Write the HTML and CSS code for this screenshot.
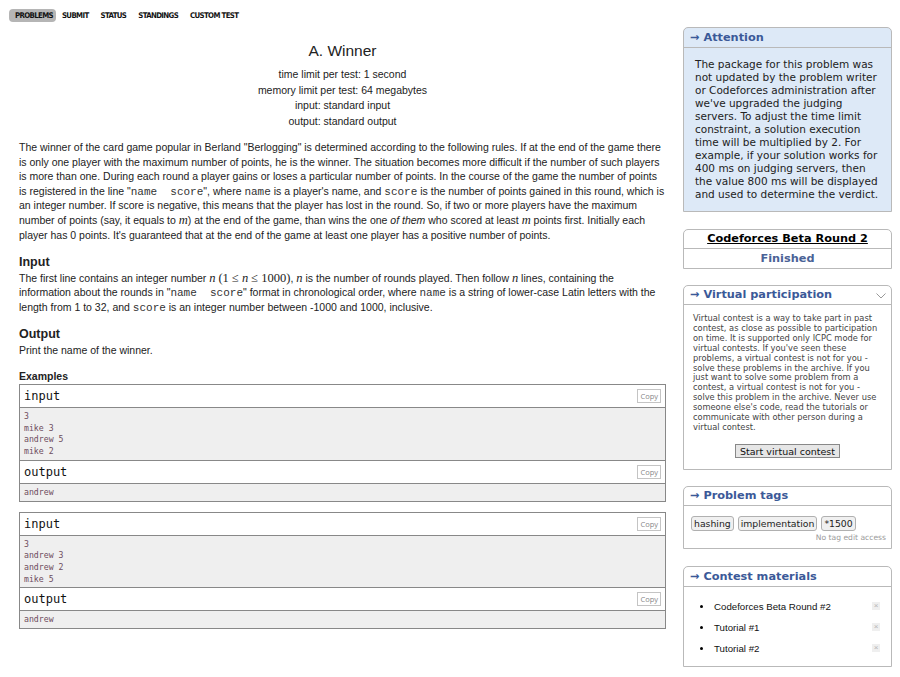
FILE: index.html
```html
<!DOCTYPE html>
<html>
<head>
<meta charset="utf-8">
<link rel="stylesheet" href="styles.css">
</head>
<body>
<nav class="nav">
  <a class="nav-item active">PROBLEMS</a>
  <a class="nav-item">SUBMIT</a>
  <a class="nav-item">STATUS</a>
  <a class="nav-item">STANDINGS</a>
  <a class="nav-item">CUSTOM TEST</a>
</nav>
<div class="layout">
  <main class="problem">
    <div class="title">A. Winner</div>
    <div class="limits">
      <div>time limit per test: 1 second</div>
      <div>memory limit per test: 64 megabytes</div>
      <div>input: standard input</div>
      <div>output: standard output</div>
    </div>
    <p class="para first">The winner of the card game popular in Berland "Berlogging" is determined according to the following rules. If at the end of the game there is only one player with the maximum number of points, he is the winner. The situation becomes more difficult if the number of such players is more than one. During each round a player gains or loses a particular number of points. In the course of the game the number of points is registered in the line "<span class="tt">name&nbsp; score</span>", where <span class="tt">name</span> is a player's name, and <span class="tt">score</span> is the number of points gained in this round, which is an integer number. If score is negative, this means that the player has lost in the round. So, if two or more players have the maximum number of points (say, it equals to <span class="math">m</span>) at the end of the game, than wins the one <i>of them</i> who scored at least <span class="math">m</span> points first. Initially each player has 0 points. It's guaranteed that at the end of the game at least one player has a positive number of points.</p>
    <div class="sec-title">Input</div>
    <p class="para">The first line contains an integer number <span class="math">n</span> <span class="mathr">(1&nbsp;≤&nbsp;<i>n</i>&nbsp;≤&nbsp;1000)</span>, <span class="math">n</span> is the number of rounds played. Then follow <span class="math">n</span> lines, containing the information about the rounds in "<span class="tt">name&nbsp; score</span>" format in chronological order, where <span class="tt">name</span> is a string of lower-case Latin letters with the length from 1 to 32, and <span class="tt">score</span> is an integer number between -1000 and 1000, inclusive.</p>
    <div class="sec-title">Output</div>
    <p class="para">Print the name of the winner.</p>
    <div class="ex-title">Examples</div>
    <div class="sample">
      <div class="s-head">input<span class="copy">Copy</span></div>
      <pre class="s-data">3
mike 3
andrew 5
mike 2</pre>
      <div class="s-head">output<span class="copy">Copy</span></div>
      <pre class="s-data last">andrew</pre>
    </div>
    <div class="sample">
      <div class="s-head">input<span class="copy">Copy</span></div>
      <pre class="s-data">3
andrew 3
andrew 2
mike 5</pre>
      <div class="s-head">output<span class="copy">Copy</span></div>
      <pre class="s-data last">andrew</pre>
    </div>
  </main>
  <aside class="sidebar">
    <section class="box attention">
      <div class="box-head">→ Attention</div>
      <div class="att-body">The package for this problem was not updated by the problem writer or Codeforces administration after we've upgraded the judging servers. To adjust the time limit constraint, a solution execution time will be multiplied by 2. For example, if your solution works for 400 ms on judging servers, then the value 800 ms will be displayed and used to determine the verdict.</div>
    </section>
    <section class="box round">
      <div class="round-name"><a>Codeforces Beta Round 2</a></div>
      <div class="round-state">Finished</div>
    </section>
    <section class="box vp">
      <div class="box-head">→ Virtual participation
        <svg class="chev" width="10" height="6" viewBox="0 0 10 6"><polyline points="0.5,0.5 5,5 9.5,0.5" fill="none" stroke="#999" stroke-width="1"/></svg>
      </div>
      <div class="vp-body">Virtual contest is a way to take part in past contest, as close as possible to participation on time. It is supported only ICPC mode for virtual contests. If you've seen these problems, a virtual contest is not for you - solve these problems in the archive. If you just want to solve some problem from a contest, a virtual contest is not for you - solve this problem in the archive. Never use someone else's code, read the tutorials or communicate with other person during a virtual contest.</div>
      <div class="vp-btn-row"><button class="vp-btn">Start virtual contest</button></div>
    </section>
    <section class="box tagbox">
      <div class="box-head">→ Problem tags</div>
      <div class="tags">
        <span class="tag">hashing</span>
        <span class="tag">implementation</span>
        <span class="tag">*1500</span>
      </div>
      <div class="no-edit">No tag edit access</div>
    </section>
    <section class="box">
      <div class="box-head">→ Contest materials</div>
      <ul class="materials">
        <li><span class="m-name">Codeforces Beta Round #2</span><span class="m-x">×</span></li>
        <li><span class="m-name">Tutorial #1</span><span class="m-x">×</span></li>
        <li><span class="m-name">Tutorial #2</span><span class="m-x">×</span></li>
      </ul>
    </section>
  </aside>
</div>
</body>
</html>
```
FILE: styles.css
```css
body {
  margin: 0;
  font-family: "Liberation Sans", Arial, sans-serif;
  color: #222;
  background: #fff;
}
.nav {
  display: flex;
  padding: 9px 0 0 9px;
}
.nav-item {
  font-family: "DejaVu Sans Condensed", "Liberation Sans", sans-serif;
  font-weight: bold;
  font-size: 7.8px;
  letter-spacing: -0.65px;
  height: 13px;
  line-height: 13px;
  padding: 0 6px;
  color: #111;
  border-radius: 4px;
}
.nav-item.active {
  background: #b5b5b5;
  padding: 0 3px 0 6px;
}
.layout {
  display: flex;
  align-items: flex-start;
  margin-top: 5px;
  padding-left: 19px;
}
.problem {
  width: 647px;
  padding-top: 14px;
}
.title {
  text-align: center;
  font-size: 15.5px;
  line-height: 20px;
}
.limits {
  margin-top: 6px;
  text-align: center;
  font-size: 10.5px;
  line-height: 15.5px;
}
.para {
  margin: 0;
  font-size: 10.5px;
  line-height: 14.6px;
}
.para.first {
  margin-top: 11px;
}
.tt {
  font-family: "Liberation Mono", monospace;
  font-size: 11px;
  line-height: 0;
  color: #333;
}
.math {
  font-family: "Liberation Serif", serif;
  font-style: italic;
  font-size: 12.5px;
  line-height: 0;
}
.mathr {
  font-family: "Liberation Serif", serif;
  font-size: 12.5px;
  line-height: 0;
}
.sec-title {
  font-weight: bold;
  font-size: 12.5px;
  line-height: 16px;
  margin-top: 11.5px;
  margin-bottom: 1px;
}
.ex-title {
  font-weight: bold;
  font-size: 10.5px;
  line-height: 14px;
  margin-top: 11.5px;
  margin-bottom: 1px;
}
.sample {
  border: 1px solid #888;
  margin-bottom: 10px;
}
.s-head {
  height: 22px;
  line-height: 22px;
  font-family: "DejaVu Sans Mono", monospace;
  font-size: 12px;
  padding-left: 4px;
  border-bottom: 1px solid #888;
  position: relative;
  color: #111;
}
.copy {
  position: absolute;
  right: 4px;
  top: 4px;
  height: 12px;
  line-height: 12px;
  padding: 0 2px;
  font-family: "Open Sans", sans-serif;
  font-size: 7.5px;
  color: #888;
  border: 1px solid #c4c4c4;
  background: #fff;
}
.s-data {
  margin: 0;
  background: #efefef;
  padding: 3px 4px 2px;
  font-family: "DejaVu Sans Mono", monospace;
  font-size: 8.2px;
  line-height: 11.7px;
  color: #6e4d5e;
  border-bottom: 1px solid #888;
}
.s-data.last {
  border-bottom: none;
  padding: 3px 4px 2px;
}
.sidebar {
  width: 209px;
  margin-left: 17px;
  font-family: "DejaVu Sans", Verdana, sans-serif;
}
.box {
  border: 1px solid #b9b9b9;
  border-radius: 5px 5px 0 0;
  margin-bottom: 16.5px;
  background: #fff;
}
.box-head {
  height: 19px;
  line-height: 19px;
  font-weight: bold;
  font-size: 11.3px;
  color: #3b5998;
  padding-left: 6px;
  border-bottom: 1px solid #b9b9b9;
  position: relative;
}
.vp .box-head {
  height: 18px;
  line-height: 18px;
}
.chev {
  position: absolute;
  right: 5px;
  top: 7px;
}
.attention {
  background: #dde9f7;
}
.att-body {
  padding: 10px 8px 10px 11px;
  font-size: 10.5px;
  line-height: 13px;
  color: #222;
}
.round {
  text-align: center;
  font-weight: bold;
  font-size: 11.3px;
}
.round-name {
  height: 18px;
  line-height: 18px;
  border-bottom: 1px solid #b9b9b9;
}
.round-name a {
  color: #000;
  text-decoration: underline;
}
.round-state {
  height: 19px;
  line-height: 19px;
  color: #4a6296;
}
.vp-body {
  padding: 9px 8px 0 9px;
  font-size: 8.3px;
  line-height: 9.9px;
  color: #444;
}
.vp-btn-row {
  text-align: center;
  padding: 7px 0 10px;
}
.vp-btn {
  font-family: "DejaVu Sans", Verdana, sans-serif;
  font-size: 9.5px;
  height: 14px;
  line-height: 11px;
  padding: 0 4px;
  background: #e6e6e6;
  border: 1px solid #888;
  border-radius: 0;
  color: #111;
}
.tagbox .box-head {
  height: 18px;
  line-height: 18px;
}
.tags {
  display: flex;
  gap: 4px;
  padding: 10px 0 0 7px;
}
.tag {
  font-size: 9.3px;
  line-height: 13px;
  padding: 0 2px;
  border: 1px solid #b0b0b0;
  border-radius: 3px;
  background: #f0f0f0;
  color: #222;
}
.no-edit {
  text-align: right;
  padding-right: 5px;
  font-size: 7.6px;
  line-height: 10px;
  margin-top: 2px;
  padding-bottom: 5px;
  color: #9a9a9a;
}
.materials {
  list-style: none;
  margin: 0;
  padding: 9px 0 7px 0;
}
.materials li {
  display: flex;
  align-items: center;
  height: 21px;
  padding-left: 30px;
  position: relative;
  font-family: "Liberation Sans", Arial, sans-serif;
  font-size: 9.7px;
  color: #111;
}
.materials li::before {
  content: "";
  position: absolute;
  left: 16px;
  top: 9px;
  width: 3px;
  height: 3px;
  border-radius: 50%;
  background: #000;
}
.m-name {
  flex: 1;
}
.m-x {
  width: 8px;
  height: 8px;
  line-height: 8px;
  text-align: center;
  font-size: 8px;
  color: #b5b5b5;
  background: #efefef;
  margin-right: 11px;
}
```
